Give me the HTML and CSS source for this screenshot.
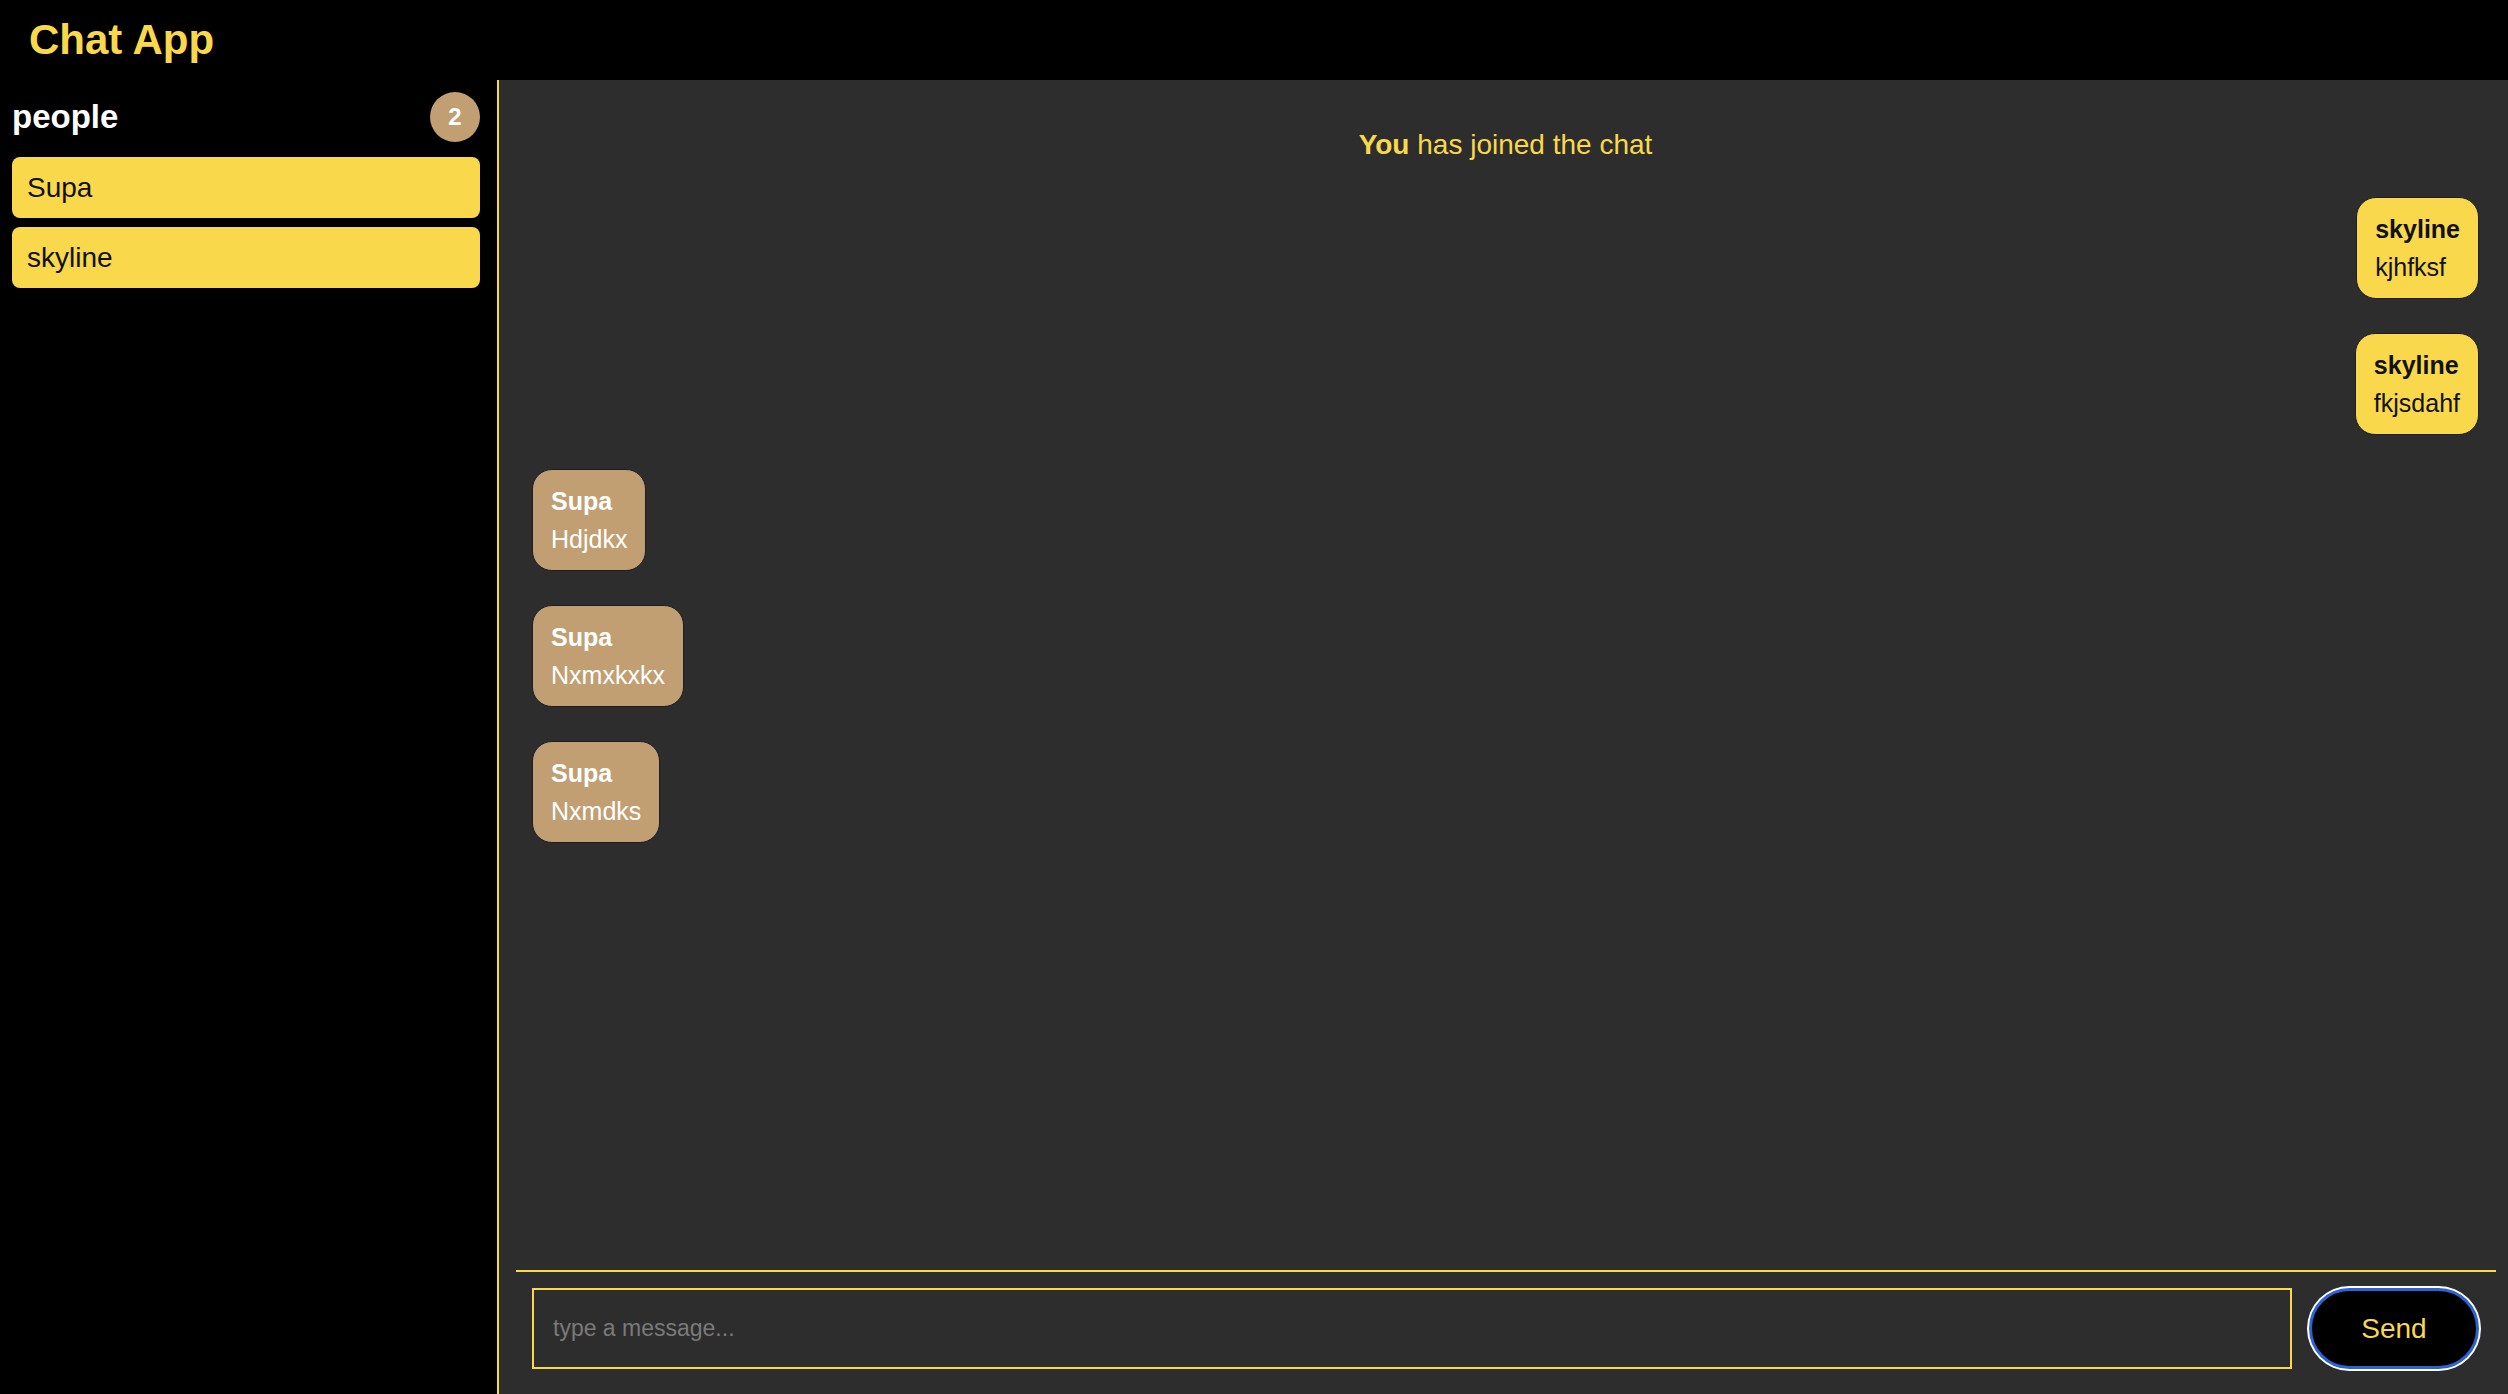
FILE: index.html
```html
<!DOCTYPE html>
<html lang="en">
<head>
<meta charset="utf-8">
<title>Chat App</title>
<link rel="stylesheet" href="styles.css">
</head>
<body>
<header class="topbar">
  <h1 class="brand">Chat App</h1>
</header>
<div class="layout">
  <aside class="sidebar">
    <div class="people-head">
      <h2 class="people-title">people</h2>
      <span class="count">2</span>
    </div>
    <ul class="people-list">
      <li class="person">Supa</li>
      <li class="person">skyline</li>
    </ul>
  </aside>
  <main class="chat">
    <section class="messages">
      <p class="system"><strong>You</strong> has joined the chat</p>
      <div class="bubble mine"><span class="author">skyline</span><span class="text">kjhfksf</span></div>
      <div class="bubble mine"><span class="author">skyline</span><span class="text">fkjsdahf</span></div>
      <div class="bubble other"><span class="author">Supa</span><span class="text">Hdjdkx</span></div>
      <div class="bubble other"><span class="author">Supa</span><span class="text">Nxmxkxkx</span></div>
      <div class="bubble other"><span class="author">Supa</span><span class="text">Nxmdks</span></div>
    </section>
    <form class="composer">
      <input class="msg-input" type="text" placeholder="type a message...">
      <button class="send" type="button">Send</button>
    </form>
  </main>
</div>
</body>
</html>
```
FILE: styles.css
```css
* { box-sizing: border-box; }

html, body {
  margin: 0;
  height: 100%;
}

body {
  background: #000;
  font-family: "Liberation Sans", Arial, sans-serif;
  display: flex;
  flex-direction: column;
  overflow: hidden;
}

.topbar {
  height: 80px;
  flex: none;
  display: flex;
  align-items: center;
  padding-left: 29px;
  background: #000;
}

.brand {
  margin: 0;
  color: #f9d84b;
  font-size: 42px;
  font-weight: 700;
  line-height: 48px;
}

.layout {
  flex: 1;
  display: flex;
  min-height: 0;
}

.sidebar {
  width: 499px;
  flex: none;
  background: #000;
  border-right: 2px solid #f9d84b;
  padding: 12px 17px 0 12px;
}

.people-head {
  display: flex;
  align-items: center;
  justify-content: space-between;
  height: 50px;
  margin-bottom: 15px;
}

.people-title {
  margin: 0;
  color: #fff;
  font-size: 33px;
  font-weight: 700;
  line-height: 38px;
}

.count {
  width: 50px;
  height: 50px;
  border-radius: 50%;
  background: #c19f73;
  color: #fff;
  font-size: 24px;
  font-weight: 700;
  display: flex;
  align-items: center;
  justify-content: center;
}

.people-list {
  list-style: none;
  margin: 0;
  padding: 0;
  display: flex;
  flex-direction: column;
  gap: 9px;
}

.person {
  background: #f9d84b;
  color: #111;
  font-size: 28px;
  line-height: 33px;
  padding: 14px 15px;
  border-radius: 8px;
}

.chat {
  flex: 1;
  background: #2d2d2d;
  display: flex;
  flex-direction: column;
  padding: 0 12px 0 17px;
  min-width: 0;
}

.messages {
  flex: 1;
  overflow: hidden;
  display: flex;
  flex-direction: column;
  align-items: flex-start;
  gap: 34px;
  padding: 49px 17px 16px 16px;
}

.system {
  align-self: stretch;
  margin: 0 0 2px;
  text-align: center;
  color: #f9d84b;
  font-size: 28px;
  line-height: 32px;
}

.system strong { font-weight: 700; }

.bubble {
  display: flex;
  flex-direction: column;
  gap: 9px;
  padding: 17px 18px;
  border: 1px solid #1d1d26;
  border-radius: 20px;
  font-size: 25px;
  line-height: 28.5px;
}

.bubble .author { font-weight: 700; }

.mine {
  align-self: flex-end;
  background: #f9d84b;
  color: #111;
}

.other {
  align-self: flex-start;
  background: #c19f73;
  color: #fff;
}

.composer {
  flex: none;
  margin: 0;
  display: flex;
  align-items: center;
  gap: 17px;
  border-top: 2px solid #f9d84b;
  padding: 16px 17px 25px 16px;
}

.msg-input {
  flex: 1;
  height: 81px;
  background: #2d2d2d;
  border: 2px solid #f9d84b;
  border-radius: 0;
  padding: 0 19px;
  font-family: "Liberation Sans", Arial, sans-serif;
  font-size: 23px;
  color: #eee;
  outline: none;
}

.msg-input::placeholder { color: #7a7a7a; }

.send {
  width: 170px;
  height: 81px;
  flex: none;
  background: #000;
  color: #f9d84b;
  border: 3px solid #2a63d3;
  border-radius: 41px;
  box-shadow: 0 0 0 2px #fff;
  font-family: "Liberation Sans", Arial, sans-serif;
  font-size: 28px;
  cursor: pointer;
}
```
